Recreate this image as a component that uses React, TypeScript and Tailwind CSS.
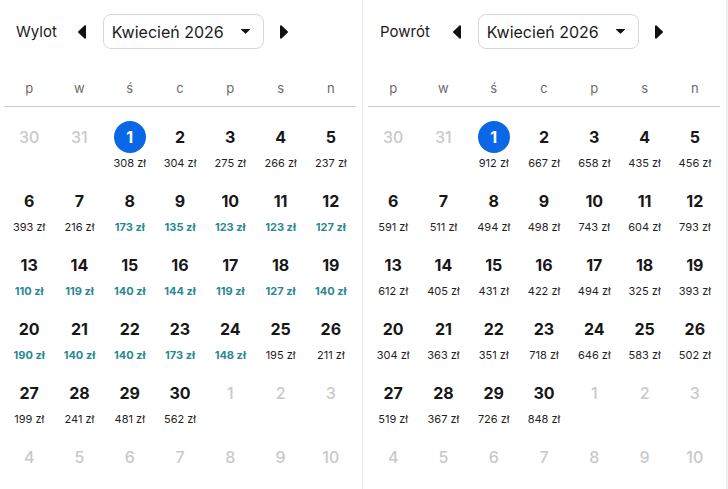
import React from "react";

type Cell = { day: number; price?: number; cheap?: boolean; muted?: boolean; selected?: boolean };

const WEEKDAYS = ["p", "w", "ś", "c", "p", "s", "n"];

// cheap: prices shown in teal
function buildMonth(prices: Record<number, number>, cheap: number[]): Cell[] {
  const cells: Cell[] = [
    { day: 30, muted: true },
    { day: 31, muted: true },
  ];
  for (let d = 1; d <= 30; d++) {
    cells.push({ day: d, price: prices[d], cheap: cheap.includes(d), selected: d === 1 });
  }
  for (let d = 1; d <= 10; d++) cells.push({ day: d, muted: true });
  return cells;
}

const outbound = buildMonth(
  {
    1: 308, 2: 304, 3: 275, 4: 266, 5: 237, 6: 393, 7: 216, 8: 173, 9: 135, 10: 123,
    11: 123, 12: 127, 13: 110, 14: 119, 15: 140, 16: 144, 17: 119, 18: 127, 19: 140, 20: 190,
    21: 140, 22: 140, 23: 173, 24: 148, 25: 195, 26: 211, 27: 199, 28: 241, 29: 481, 30: 562,
  },
  [8, 9, 10, 11, 12, 13, 14, 15, 16, 17, 18, 19, 20, 21, 22, 23, 24],
);

const inbound = buildMonth(
  {
    1: 912, 2: 667, 3: 658, 4: 435, 5: 456, 6: 591, 7: 511, 8: 494, 9: 498, 10: 743,
    11: 604, 12: 793, 13: 612, 14: 405, 15: 431, 16: 422, 17: 494, 18: 325, 19: 393, 20: 304,
    21: 363, 22: 351, 23: 718, 24: 646, 25: 583, 26: 502, 27: 519, 28: 367, 29: 726, 30: 848,
  },
  [],
);

function Arrow({ dir }: { dir: "left" | "right" }) {
  return (
    <svg width="10" height="14" viewBox="0 0 10 14" className="shrink-0">
      {dir === "left" ? (
        <path d="M9 1.2v11.6c0 .8-.9 1.2-1.5.7L1.4 7.8a1 1 0 0 1 0-1.6l6.1-5.7C8.1 0 9 .4 9 1.2z" fill="#111" />
      ) : (
        <path d="M1 1.2v11.6c0 .8.9 1.2 1.5.7l6.1-5.7a1 1 0 0 0 0-1.6L2.5.5C1.9 0 1 .4 1 1.2z" fill="#111" />
      )}
    </svg>
  );
}

function DayCell({ cell }: { cell: Cell }) {
  return (
    <div className="flex h-[64px] flex-col items-center pt-[14px]">
      <div
        className={
          cell.selected
            ? "flex h-[32px] w-[32px] items-center justify-center rounded-full bg-[#0a68e6] text-[16px] font-bold text-white"
            : cell.muted
              ? "flex h-[32px] items-center justify-center text-[16px] font-medium text-[#c9c9c9]"
              : "flex h-[32px] items-center justify-center text-[16px] font-bold text-[#171717]"
        }
      >
        {cell.day}
      </div>
      {cell.price !== undefined && (
        <div
          className={
            cell.cheap
              ? "mt-[2px] text-[11px] leading-[16px] font-bold text-[#2a8990]"
              : "mt-[2px] text-[11px] leading-[16px] text-[#1f1f1f]"
          }
        >
          {cell.price} zł
        </div>
      )}
    </div>
  );
}

function MonthPanel({ label, cells, first }: { label: string; cells: Cell[]; first?: boolean }) {
  return (
    <section
      className={
        first
          ? "w-[363px] shrink-0 border-r border-[#e3e5e8] pl-[4px] pr-[6px]"
          : "w-[363px] shrink-0 pl-[5px] pr-[6px]"
      }
    >
      <div className="mt-[14px] flex h-[35px] items-center pl-[12px]">
        <span className="pt-[2px] text-[15px] text-[#1a1a1a]">{label}</span>
        <button className={first ? "ml-[20px] flex items-center" : "ml-[22px] flex items-center"}>
          <Arrow dir="left" />
        </button>
        <div className="ml-[16px] flex h-[35px] w-[161px] items-center justify-between rounded-[8px] border border-[#d4d7dc] pl-[8px] pr-[13px]">
          <span className="text-[16px] text-[#1a1a1a]">Kwiecień 2026</span>
          <svg width="9" height="5" viewBox="0 0 9 5">
            <path d="M0.5 0h8a.5.5 0 0 1 .35.85L4.85 4.6a.5.5 0 0 1-.7 0L.15.85A.5.5 0 0 1 .5 0z" fill="#111" />
          </svg>
        </div>
        <button className="ml-[15px] flex items-center">
          <Arrow dir="right" />
        </button>
      </div>
      <div className="mt-[23px] grid h-[35px] grid-cols-7 items-center border-b border-[#c9ced6] text-[13px] text-[#6b6b6b]">
        {WEEKDAYS.map((w, i) => (
          <div key={i} className="text-center">
            {w}
          </div>
        ))}
      </div>
      <div className="grid grid-cols-7">
        {cells.map((c, i) => (
          <DayCell key={i} cell={c} />
        ))}
      </div>
    </section>
  );
}

export default function App() {
  return (
    <div
      className="flex h-[489px] w-[728px] overflow-hidden bg-white"
      style={{ fontFamily: "Inter, 'Noto Sans', sans-serif" }}
    >
      <MonthPanel label="Wylot" cells={outbound} first />
      <MonthPanel label="Powrót" cells={inbound} />
      <div className="w-[2px] shrink-0 bg-[#eef0f3]" />
    </div>
  );
}
